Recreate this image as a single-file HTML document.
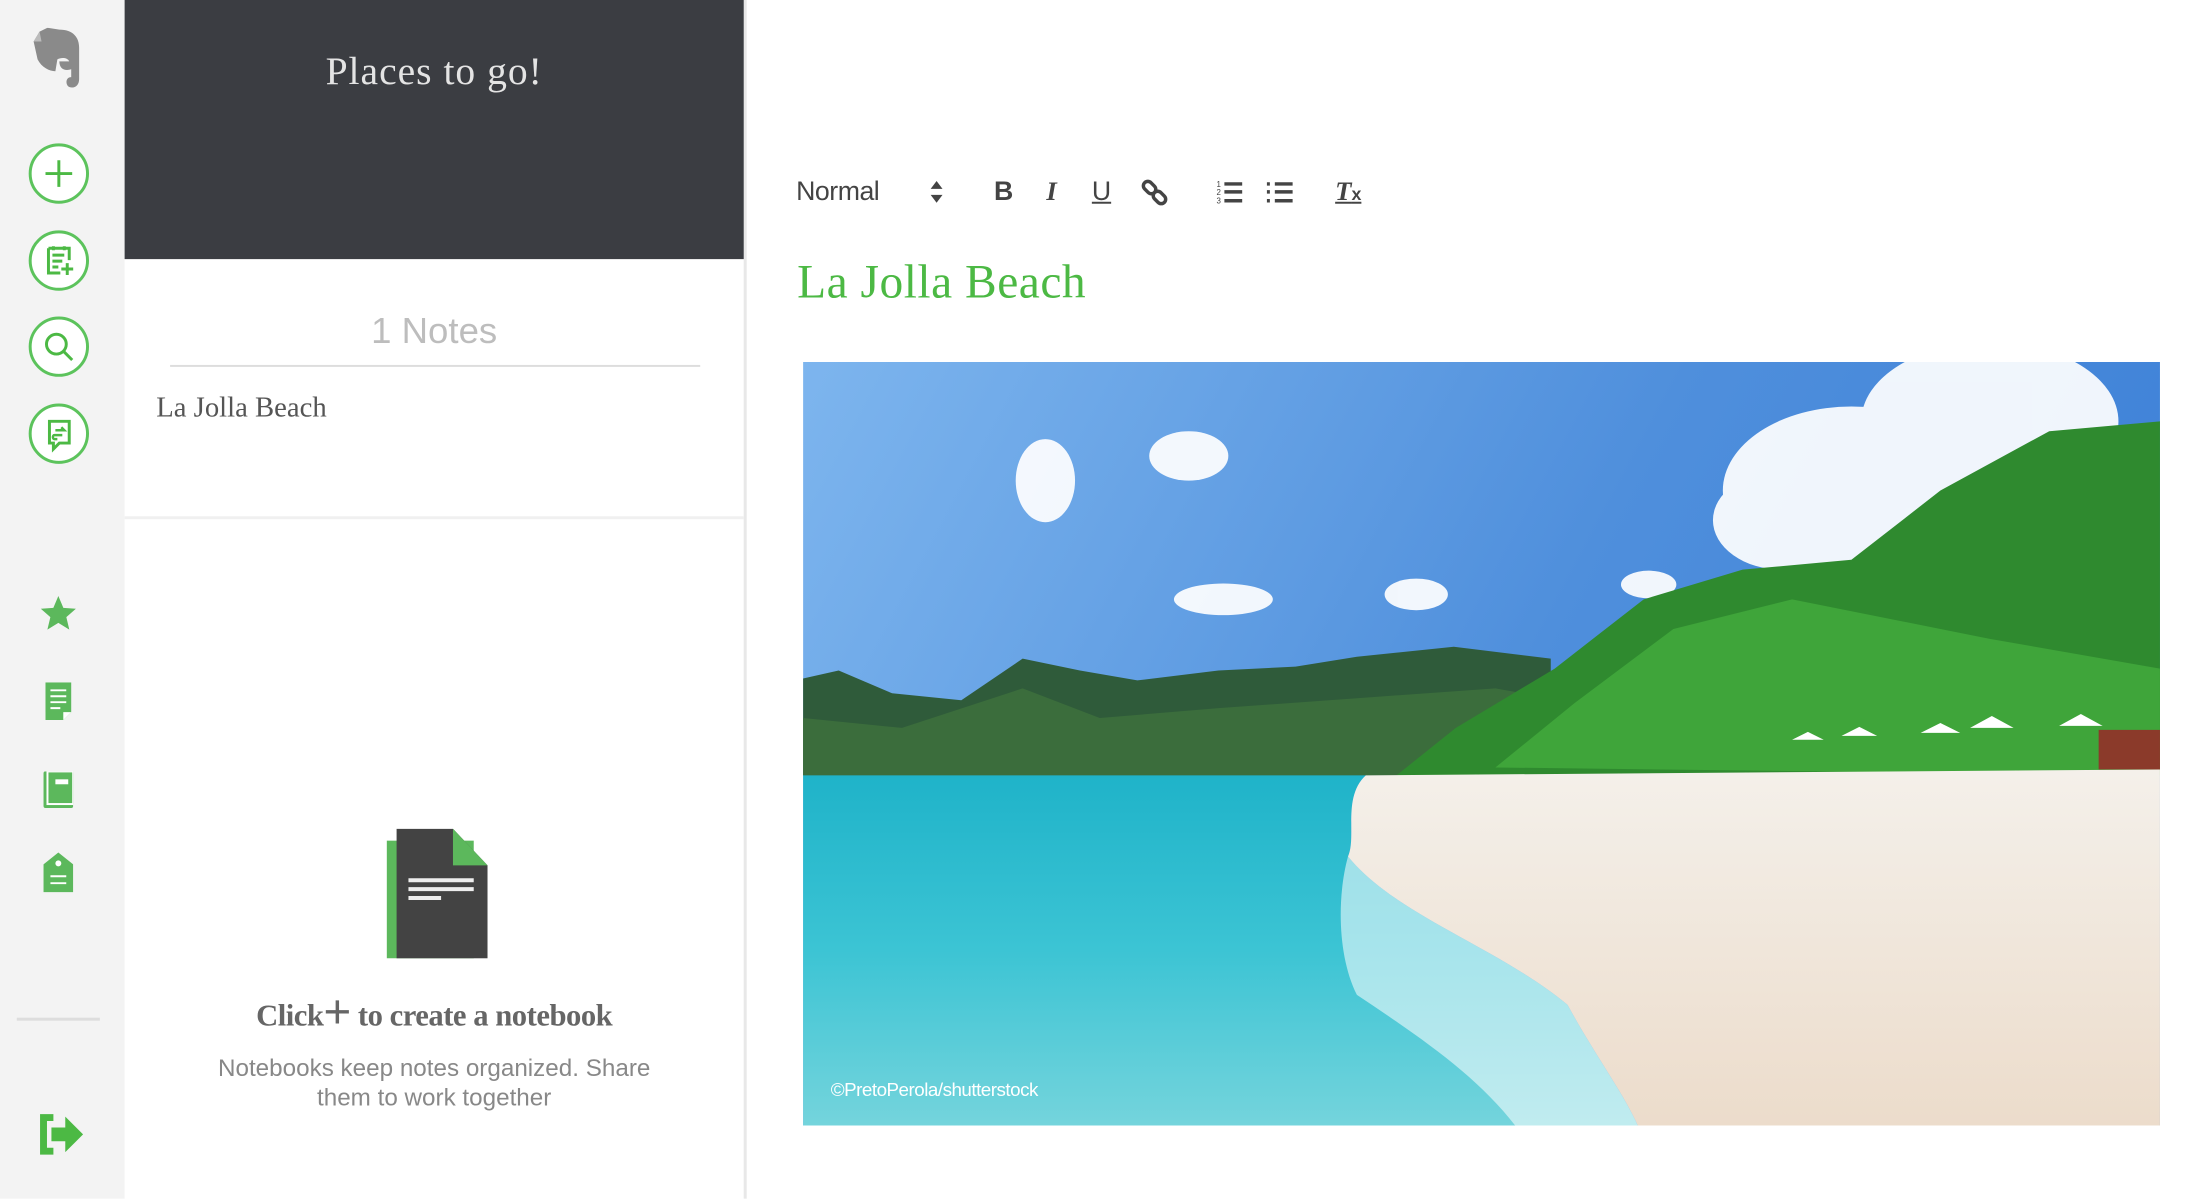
<!DOCTYPE html>
<html><head><meta charset="utf-8"><style>
*{margin:0;padding:0;box-sizing:border-box}
body{width:2204px;height:1198px;overflow:hidden;background:#fff;font-family:"Liberation Sans",sans-serif;position:relative}
#wrap{position:absolute;left:0;top:0;width:2229px;height:1212px;transform:scale(0.989);transform-origin:0 0}
.abs{position:absolute}
#side{left:0;top:0;width:126px;height:1212px;background:#f3f3f3}
#mid{left:126px;top:0;width:629px;height:1212px;background:#fff;border-right:3px solid #e8e8e8}
#hdr{left:0;top:0;width:626px;height:262px;background:#3b3d42}
.circ{left:29px;width:61px;height:61px;border:3px solid #5cc35c;border-radius:50%;background:#fff}
.tb{top:178px;color:#444;font-size:27px}
</style></head><body><div id="wrap">
<div id="side" class="abs">
  <svg class="abs" style="left:30px;top:28px" width="54" height="62" viewBox="0 0 54 62"><path d="M10 4 L18 0 L30 2 C44 2 50 10 50 20 L50 52 C50 58 46 62 40 60 C36 58 36 50 42 50 L42 42 C36 44 30 42 30 34 L40 34 C38 30 32 30 28 32 L26 44 C20 44 12 40 8 32 L4 14 Z" fill="#8a8a8a"/><path d="M10 4 L12 14 L4 14 Z" fill="#bbb"/></svg>
  <div class="abs circ" style="top:145px"><svg width="55" height="55" viewBox="0 0 55 55"><path d="M27.5 14v27M14 27.5h27" stroke="#4cb944" stroke-width="3"/></svg></div>
  <div class="abs circ" style="top:233px"><svg width="55" height="55" viewBox="0 0 55 55"><path d="M17 15h21v12M17 15v25h12M21 22h12M21 28h10M21 34h6M36 30v12M30 36h12M22 13v4M33 13v4" stroke="#4cb944" stroke-width="3" fill="none"/></svg></div>
  <div class="abs circ" style="top:320px"><svg width="55" height="55" viewBox="0 0 55 55"><circle cx="25" cy="25" r="10" stroke="#4cb944" stroke-width="3" fill="none"/><path d="M32 32l9 9" stroke="#4cb944" stroke-width="3"/></svg></div>
  <div class="abs circ" style="top:408px"><svg width="55" height="55" viewBox="0 0 55 55"><path d="M18 15h20v22H28l-6 6v-6h-4z" stroke="#4cb944" stroke-width="3" fill="none"/><path d="M24 24h9l-3-3M31 29h-8c-2 0-2 4 0 4h3" stroke="#4cb944" stroke-width="2.5" fill="none"/></svg></div>
  <svg class="abs" style="left:40px;top:601px" width="38" height="38" viewBox="0 0 24 24"><path d="M12 1l3.2 7.6 8 .6-6.1 5.3 1.9 8L12 18.2 5 22.5l1.9-8L.8 9.2l8-.6z" fill="#5cb85c"/></svg>
  <svg class="abs" style="left:44px;top:690px" width="30" height="38" viewBox="0 0 30 38"><path d="M2 0h26v30l-8 8H2z" fill="#5cb85c"/><path d="M7 8h16M7 14h16M7 20h16M7 26h10" stroke="#fff" stroke-width="2"/><path d="M20 38v-8h8" fill="#fff"/></svg>
  <svg class="abs" style="left:44px;top:780px" width="30" height="40" viewBox="0 0 30 40"><rect x="0" y="0" width="30" height="37" rx="2" fill="#5cb85c"/><rect x="4" y="0" width="26" height="33" fill="#5cb85c" stroke="#fff" stroke-width="2"/><rect x="12" y="8" width="13" height="5" fill="#fff"/></svg>
  <svg class="abs" style="left:44px;top:862px" width="30" height="42" viewBox="0 0 30 42"><path d="M15 0l15 12v28H0V12z" fill="#5cb85c"/><circle cx="15" cy="11" r="3" fill="#fff"/><path d="M7 24h16M7 31h16" stroke="#fff" stroke-width="2"/></svg>
  <div class="abs" style="left:17px;top:1029px;width:84px;height:3px;background:#ddd"></div>
  <svg class="abs" style="left:38px;top:1126px" width="48" height="42" viewBox="0 0 48 42"><path d="M16 4H6v34h10" stroke="#4cb944" stroke-width="7" fill="none"/><path d="M14 14h14V3l18 18-18 18V28H14z" fill="#4cb944"/></svg>
</div>
<div id="mid" class="abs">
  <div id="hdr" class="abs"><div class="abs" style="left:0;width:626px;top:48px;text-align:center;color:#e4e4e4;font-family:'Liberation Serif',serif;font-size:40px;letter-spacing:1px">Places to go!</div></div>
  <div class="abs" style="left:0;width:626px;top:314px;text-align:center;color:#bdbdbd;font-size:37px">1 Notes</div>
  <div class="abs" style="left:46px;top:369px;width:536px;height:2px;background:#ddd"></div>
  <div class="abs" style="left:32px;top:396px;color:#555;font-family:'Liberation Serif',serif;font-size:29px">La Jolla Beach</div>
  <div class="abs" style="left:0;top:522px;width:626px;height:3px;background:#f0f0f0"></div>
  <svg class="abs" style="left:265px;top:838px" width="102" height="131" viewBox="0 0 102 131"><rect x="0" y="12" width="88" height="119" fill="#5cb85c"/><path d="M10 0h57l35 37v94H10z" fill="#434343"/><path d="M67 0l35 37H67z" fill="#5cb85c"/><path d="M22 52h66M22 61h66M22 70h33" stroke="#eee" stroke-width="4"/></svg>
  <div class="abs" style="left:0;width:626px;top:996px;text-align:center;color:#666;font-family:'Liberation Serif',serif;font-weight:bold;font-size:31px;letter-spacing:-0.5px">Click<span style="font-weight:normal;font-size:48px;vertical-align:-2px;font-family:'Liberation Sans'">+</span> to create a notebook</div>
  <div class="abs" style="left:0;width:626px;top:1066px;text-align:center;color:#888;font-size:24.5px;line-height:30px">Notebooks keep notes organized. Share<br>them to work together</div>
</div>
<div class="abs tb" style="left:805px;letter-spacing:-0.5px">Normal</div>
<svg class="abs" style="left:940px;top:182px" width="14" height="24" viewBox="0 0 14 24"><path d="M7 1l6 8H1zM7 23l6-8H1z" fill="#444"/></svg>
<div class="abs tb" style="left:1005px;font-weight:bold">B</div>
<div class="abs tb" style="left:1058px;font-family:'Liberation Serif';font-style:italic;font-weight:bold">I</div>
<div class="abs tb" style="left:1104px;text-decoration:underline">U</div>
<svg class="abs" style="left:1152px;top:180px" width="30" height="30" viewBox="0 0 30 30"><rect x="3" y="5" width="14" height="9" rx="4.5" transform="rotate(45 10 10)" stroke="#444" stroke-width="3.5" fill="none"/><rect x="13" y="15" width="14" height="9" rx="4.5" transform="rotate(45 20 20)" stroke="#444" stroke-width="3.5" fill="none"/></svg>
<svg class="abs" style="left:1230px;top:181px" width="30" height="26" viewBox="0 0 30 26"><text x="0" y="8" font-size="8" fill="#444" font-family="Liberation Sans">1</text><text x="0" y="16" font-size="8" fill="#444" font-family="Liberation Sans">2</text><text x="0" y="25" font-size="8" fill="#444" font-family="Liberation Sans">3</text><path d="M8 5h18M8 13h18M8 22h18" stroke="#444" stroke-width="3.5"/></svg>
<svg class="abs" style="left:1280px;top:181px" width="30" height="26" viewBox="0 0 30 26"><path d="M1 5h3M1 13h3M1 22h3M9 5h18M9 13h18M9 22h18" stroke="#444" stroke-width="3.5"/></svg>
<div class="abs tb" style="left:1350px;font-family:'Liberation Serif';font-style:italic;font-weight:bold;text-decoration:underline">T<span style="font-size:18px;font-style:normal;font-family:'Liberation Sans'">x</span></div>
<div class="abs" style="left:806px;top:258px;color:#4cb944;font-family:'Liberation Serif',serif;font-size:48px;letter-spacing:0.5px">La Jolla Beach</div>
<svg class="abs" style="left:812px;top:366px" width="1372" height="772" viewBox="0 0 1372 772" preserveAspectRatio="none">
<defs>
<linearGradient id="sky" x1="0" y1="0" x2="1" y2="0.3"><stop offset="0" stop-color="#7db5ee"/><stop offset="0.6" stop-color="#4f8fdc"/><stop offset="1" stop-color="#3f82d8"/></linearGradient>
<linearGradient id="sea" x1="0" y1="0" x2="0" y2="1"><stop offset="0" stop-color="#1fb3c9"/><stop offset="0.5" stop-color="#3cc4d4"/><stop offset="1" stop-color="#74d4dc"/></linearGradient>
<linearGradient id="sand" x1="0" y1="0" x2="0" y2="1"><stop offset="0" stop-color="#f4f0ea"/><stop offset="1" stop-color="#ecdccb"/></linearGradient>
</defs>
<rect width="1372" height="772" fill="url(#sky)"/>
<g fill="#fff" opacity="0.92">
<ellipse cx="1060" cy="130" rx="130" ry="85"/><ellipse cx="1200" cy="60" rx="130" ry="80"/><ellipse cx="990" cy="160" rx="70" ry="50"/>
<ellipse cx="245" cy="120" rx="30" ry="42"/><ellipse cx="390" cy="95" rx="40" ry="25"/><ellipse cx="425" cy="240" rx="50" ry="16"/><ellipse cx="620" cy="235" rx="32" ry="16"/><ellipse cx="855" cy="225" rx="28" ry="14"/>
</g>
<path d="M0 320 L36 312 L90 335 L160 342 L222 300 L280 312 L338 322 L420 312 L498 308 L560 298 L658 288 L756 300 L756 418 L0 418Z" fill="#2f5b3a"/>
<path d="M0 360 L100 370 L222 330 L300 360 L420 350 L560 340 L700 330 L756 340 L756 418 L0 418Z" fill="#3b6d3c"/>
<path d="M600 418 L660 370 L760 310 L850 240 L950 210 L1060 200 L1150 130 L1260 70 L1372 60 L1372 418Z" fill="#2f8a2f"/>
<path d="M700 410 L780 345 L880 270 L1000 240 L1100 260 L1200 280 L1372 310 L1372 418Z" fill="#3fa53a"/>
<g fill="#fff"><path d="M1130 375 l20-10 20 10z"/><path d="M1180 370 l22-12 22 12z"/><path d="M1270 368 l22-12 22 12z"/><path d="M1050 378 l18-9 18 9z"/><path d="M1000 382 l16-8 16 8z"/></g>
<rect x="1310" y="372" width="62" height="40" fill="#8b3a2a"/>
<path d="M0 418 L569 418 C545 440 560 480 551 500 C600 560 700 590 773 650 C800 700 830 740 844 772 L0 772Z" fill="url(#sea)"/>
<path d="M569 418 L1372 412 L1372 772 L844 772 C830 740 800 700 773 650 C700 590 600 560 551 500 C560 480 545 440 569 418Z" fill="url(#sand)"/>
<path d="M551 500 C600 560 700 590 773 650 C800 700 830 740 844 772 L720 772 C680 720 620 680 560 640 C540 600 540 540 551 500Z" fill="#fff" opacity="0.55"/>
<text x="28" y="742" font-family="Liberation Sans" font-size="19" fill="#fff" letter-spacing="-0.5">©PretoPerola/shutterstock</text>
</svg>
</div></body></html>
